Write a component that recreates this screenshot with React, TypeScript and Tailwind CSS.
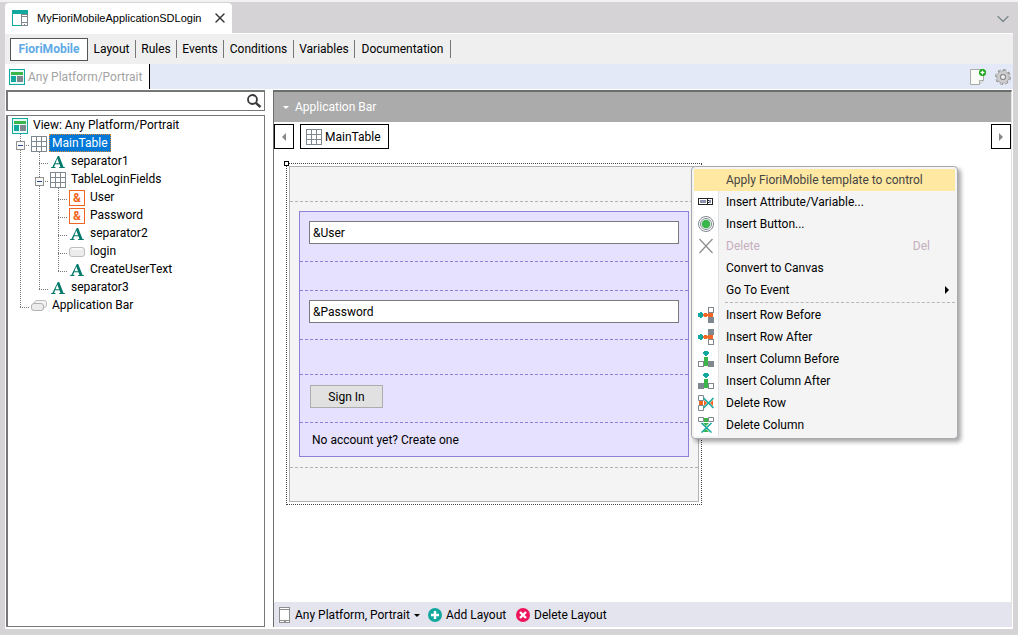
import type { ReactNode } from 'react'
import { ChevronDown, X } from 'lucide-react'
import clsx from 'clsx'

type Guide = 'line' | 'tee' | 'end'
type IconName = 'view' | 'grid' | 'text' | 'var' | 'button' | 'bar'

interface TreeRow {
  label: string
  icon: IconName
  guides: Guide[]
  expander?: boolean
  selected?: boolean
}

interface MenuEntry {
  label: string
  icon?: ReactNode
  shortcut?: string
  disabled?: boolean
  active?: boolean
  submenu?: boolean
}

// ─── Icons ───────────────────────────────────────────────────────────────────

function ViewIcon() {
  return (
    <svg className="h-4 w-4 shrink-0" viewBox="0 0 16 16" shapeRendering="crispEdges">
      <rect x="0.5" y="0.5" width="15" height="15" fill="#e9fbf8" stroke="#13a89e" />
      <rect x="2" y="3" width="12" height="3" fill="#39b54a" />
      <rect x="2" y="7" width="5" height="6" fill="#13a89e" />
      <rect x="8" y="7" width="6" height="6" fill="#7f888f" />
    </svg>
  )
}

function GridIcon() {
  return (
    <svg className="h-4 w-4 shrink-0" viewBox="0 0 16 16" shapeRendering="crispEdges">
      <rect x="0.5" y="0.5" width="15" height="15" fill="#fff" stroke="#7f888f" />
      <path d="M5.5 1v14M10.5 1v14M1 5.5h14M1 10.5h14" stroke="#7f888f" />
    </svg>
  )
}

function TextIcon() {
  return (
    <svg className="h-4 w-4 shrink-0" viewBox="0 0 16 16" fill="#00796b">
      <path d="M7.8 2h1.4l4.3 10.9 1.5.4v.7H9v-.7l1.5-.4-1-2.7H5.1l-1 2.7 1.5.4v.7H1v-.7l1.4-.4zM5.5 9.2h3.6L7.3 4.5z" />
    </svg>
  )
}

function VarIcon() {
  return (
    <span className="flex h-4 w-4 shrink-0 items-center justify-center border border-[#f26522] bg-white text-[12px] leading-3 font-bold text-[#f26522]">
      &amp;
    </span>
  )
}

function ButtonIcon() {
  return (
    <svg className="h-4 w-4 shrink-0" viewBox="0 0 16 16">
      <rect x="0.5" y="3.5" width="15" height="9" rx="2.5" fill="#ececec" stroke="#bdbdbd" />
      <path d="M3 5h10" stroke="#fafafa" strokeWidth="2" />
    </svg>
  )
}

function BarIcon() {
  return (
    <svg className="h-4 w-4 shrink-0" viewBox="0 0 16 16">
      <rect x="3.5" y="2.5" width="12" height="7" rx="2.5" fill="#f4f4f4" stroke="#bdbdbd" />
      <rect x="0.5" y="5.5" width="12" height="7" rx="2.5" fill="#ececec" stroke="#b0b0b0" />
    </svg>
  )
}

function NodeIcon({ name }: { name: IconName }) {
  switch (name) {
    case 'view':
      return <ViewIcon />
    case 'grid':
      return <GridIcon />
    case 'text':
      return <TextIcon />
    case 'var':
      return <VarIcon />
    case 'button':
      return <ButtonIcon />
    default:
      return <BarIcon />
  }
}

function PanelIcon() {
  return (
    <svg className="h-4 w-4 shrink-0" viewBox="0 0 16 16" shapeRendering="crispEdges">
      <path d="M0.5 4v11.500H9M15.500 3v2" fill="none" stroke="#13a89e" />
      <rect x="0" y="0" width="16" height="4" fill="#13a89e" />
      <rect x="9.500" y="4.500" width="6" height="11" fill="#fff" stroke="#7f888f" />
      <path d="M10 6.500h5M10 12.500h5M12 14h1" stroke="#7f888f" />
    </svg>
  )
}

function AttributeIcon() {
  return (
    <svg className="h-4 w-4" viewBox="0 0 16 16" shapeRendering="crispEdges">
      <rect x="0.5" y="4.500" width="14" height="6" fill="#fff" stroke="#222" />
      <rect x="2" y="6" width="6" height="3" fill="#8f8fb0" />
      <rect x="11" y="6" width="2" height="3" fill="#8f8fb0" />
      <path d="M9.500 4v7" stroke="#222" />
      <path d="M10.500 4v7" stroke="#222" strokeDasharray="1 1" />
    </svg>
  )
}

function TargetIcon() {
  return (
    <svg className="h-4 w-4" viewBox="0 0 16 16" fill="none" stroke="#7f888f">
      <circle cx="8" cy="8" r="7.500" />
      <circle cx="8" cy="8" r="5.500" />
      <circle cx="8" cy="8" r="4.300" fill="#39b54a" stroke="none" />
    </svg>
  )
}

function CrossIcon() {
  return (
    <svg className="h-4 w-4" viewBox="0 0 16 16" stroke="#8f8f8f" strokeWidth="1.300">
      <path d="M1.500 1l13 14M14.500 1l-13 14" />
    </svg>
  )
}

function InsertRowIcon({ after }: { after?: boolean }) {
  return (
    <svg className="h-4 w-4" viewBox="0 0 16 16" shapeRendering="crispEdges">
      <path d="M0 6h2V5h2v1h1v4H4v1H2v-1H0z" fill="#13a89e" />
      <path d="M6 6h3v4H6zM10 6h5v5h-5z" fill="#f26522" />
      <path d="M5 8h6" stroke="#f26522" strokeWidth="2" />
      <rect x="10.500" y="0.500" width="5" height="5" fill={after ? '#7f888f' : '#fff'} stroke="#7f888f" />
      <rect x="10.500" y="10.500" width="5" height="5" fill={after ? '#fff' : '#7f888f'} stroke="#7f888f" />
    </svg>
  )
}

function InsertColumnIcon({ after }: { after?: boolean }) {
  return (
    <svg className="h-4 w-4" viewBox="0 0 16 16" shapeRendering="crispEdges">
      <path d="M6 0h4v1h1v2h-1v1H9v1H7V4H6V3H5V1h1z" fill="#13a89e" />
      <path d="M6 6h4v4h1v5H5v-5h1z" fill="#39b54a" />
      <rect x="0.500" y="10.500" width="5" height="5" fill={after ? '#7f888f' : '#fff'} stroke="#7f888f" />
      <rect x="10.500" y="10.500" width="5" height="5" fill={after ? '#fff' : '#7f888f'} stroke="#7f888f" />
    </svg>
  )
}

function DeleteRowIcon() {
  return (
    <svg className="h-4 w-4" viewBox="0 0 16 16">
      <path d="M1 6h4v4H1zM6 5l3 3-3 3zM15 5l-3 3 3 3z" fill="#f26522" />
      <path d="M0.500 0.500h5v5h-5zM0.500 10.500h5v5h-5z" fill="#fff" stroke="#7f888f" />
      <path d="M5.500 3l10 10M15.500 3l-10 10" stroke="#13a89e" strokeWidth="1.500" />
    </svg>
  )
}

function DeleteColumnIcon() {
  return (
    <svg className="h-4 w-4" viewBox="0 0 16 16">
      <path d="M6 1h4v4H6zM5 6h6l-3 3zM5 15l3-3 3 3z" fill="#39b54a" />
      <path d="M0.500 0.500h5v4h-5zM10.500 0.500h5v4h-5z" fill="#fff" stroke="#7f888f" />
      <path d="M3.500 6l10 9.500M13.500 6l-10 9.500" stroke="#13a89e" strokeWidth="1.500" />
    </svg>
  )
}

function NewPageIcon() {
  return (
    <svg className="h-4 w-4" viewBox="0 0 16 16">
      <path d="M0.500 0.500h13v11l-4 4h-9z" fill="#fbfcf8" stroke="#a9aca6" />
      <path d="M9.500 15.500v-4h4" fill="#e6e6e6" stroke="#a9aca6" />
      <circle cx="12.500" cy="3.500" r="3.500" fill="#12a312" />
      <path d="M12.500 1.500v4M10.500 3.500h4" stroke="#fff" strokeWidth="1.300" />
    </svg>
  )
}

function GearIcon() {
  return (
    <svg className="h-4 w-4" viewBox="0 0 16 16" fill="none">
      <circle cx="8" cy="8" r="6.800" stroke="#8a8a8a" strokeWidth="2.200" strokeDasharray="3 2.340" />
      <circle cx="8" cy="8" r="4.500" stroke="#8a8a8a" strokeWidth="4" />
      <circle cx="8" cy="8" r="4.500" stroke="#cdcdcd" strokeWidth="2.800" />
      <circle cx="8" cy="8" r="6.400" stroke="#cdcdcd" strokeWidth="1.500" strokeDasharray="2 3.030" strokeDashoffset="-0.500" />
      <circle cx="8" cy="8" r="2.500" fill="#f0f2f8" stroke="#7d7d7d" />
    </svg>
  )
}

function SearchIcon() {
  return (
    <svg className="h-4 w-4 shrink-0" viewBox="0 0 16 16" fill="none" stroke="#3a3a3a">
      <circle cx="6.500" cy="6.500" r="4.500" strokeWidth="1.800" />
      <path d="M9.800 9.800l4.700 4.200" strokeWidth="2.400" />
    </svg>
  )
}

function PhoneIcon() {
  return (
    <svg className="h-4 w-3 shrink-0" viewBox="0 0 12 16" shapeRendering="crispEdges">
      <rect x="0.500" y="0.500" width="10" height="15" fill="#fff" stroke="#8f8f8f" />
      <path d="M1 2.500h9M1 13.500h9M5 14.500h2" stroke="#8f8f8f" />
    </svg>
  )
}

function AddIcon() {
  return (
    <svg className="h-4 w-4 shrink-0" viewBox="0 0 16 16">
      <circle cx="8" cy="8" r="7" fill="#13a89e" />
      <path d="M8 4v8M4 8h8" stroke="#fff" strokeWidth="2.400" />
    </svg>
  )
}

function RemoveIcon() {
  return (
    <svg className="h-4 w-4 shrink-0" viewBox="0 0 16 16">
      <circle cx="8" cy="8" r="7" fill="#ed145b" />
      <path d="M5 5l6 6M11 5l-6 6" stroke="#fff" strokeWidth="2.400" />
    </svg>
  )
}

function Arrow({ dir, className }: { dir: 'left' | 'right' | 'down'; className?: string }) {
  const d = { left: 'M5 0v8L1 4z', right: 'M1 0v8l4-4z', down: 'M0 3h6L3 6z' }[dir]
  return (
    <svg className={clsx('h-2 w-1.5 shrink-0', className)} viewBox="0 0 6 8" fill="currentColor">
      <path d={d} />
    </svg>
  )
}

// ─── Data ────────────────────────────────────────────────────────────────────

const TABS = [
  { label: 'Layout', width: 'w-12' },
  { label: 'Rules', width: 'w-[41px]' },
  { label: 'Events', width: 'w-[47px]' },
  { label: 'Conditions', width: 'w-[70px]' },
  { label: 'Variables', width: 'w-[61px]' },
  { label: 'Documentation', width: 'w-24' },
]

const TREE: TreeRow[] = [
  { label: 'View: Any Platform/Portrait', icon: 'view', guides: [] },
  { label: 'MainTable', icon: 'grid', guides: ['tee'], expander: true, selected: true },
  { label: 'separator1', icon: 'text', guides: ['line', 'tee'] },
  { label: 'TableLoginFields', icon: 'grid', guides: ['line', 'tee'], expander: true },
  { label: 'User', icon: 'var', guides: ['line', 'line', 'tee'] },
  { label: 'Password', icon: 'var', guides: ['line', 'line', 'tee'] },
  { label: 'separator2', icon: 'text', guides: ['line', 'line', 'tee'] },
  { label: 'login', icon: 'button', guides: ['line', 'line', 'tee'] },
  { label: 'CreateUserText', icon: 'text', guides: ['line', 'line', 'end'] },
  { label: 'separator3', icon: 'text', guides: ['line', 'end'] },
  { label: 'Application Bar', icon: 'bar', guides: ['end'] },
]

const MENU_TOP: MenuEntry[] = [
  { label: 'Apply FioriMobile template to control', active: true },
  { label: 'Insert Attribute/Variable...', icon: <AttributeIcon /> },
  { label: 'Insert Button...', icon: <TargetIcon /> },
  { label: 'Delete', icon: <CrossIcon />, shortcut: 'Del', disabled: true },
  { label: 'Convert to Canvas' },
  { label: 'Go To Event', submenu: true },
]

const MENU_BOTTOM: MenuEntry[] = [
  { label: 'Insert Row Before', icon: <InsertRowIcon /> },
  { label: 'Insert Row After', icon: <InsertRowIcon after /> },
  { label: 'Insert Column Before', icon: <InsertColumnIcon /> },
  { label: 'Insert Column After', icon: <InsertColumnIcon after /> },
  { label: 'Delete Row', icon: <DeleteRowIcon /> },
  { label: 'Delete Column', icon: <DeleteColumnIcon /> },
]

// ─── Parts ───────────────────────────────────────────────────────────────────

function TreeGuide({ kind, expander }: { kind: Guide; expander?: boolean }) {
  return (
    <svg className="h-[18px] w-[19px] shrink-0" viewBox="0 0 19 18" shapeRendering="crispEdges" fill="none">
      <path d={kind === 'end' ? 'M9.500 0v12' : 'M9.500 0v18'} stroke="#777" strokeDasharray="1 1" />
      {kind !== 'line' && <path d="M9 11.500h10" stroke="#777" strokeDasharray="1 1" />}
      {expander && (
        <>
          <rect x="5.500" y="7.500" width="8" height="8" fill="#f7f7f7" stroke="#919191" />
          <path d="M7 11.500h5" stroke="#2b4b8f" />
        </>
      )}
    </svg>
  )
}

function TreeItem({ row }: { row: TreeRow }) {
  const last = row.guides.length - 1
  return (
    <li role="treeitem" aria-selected={!!row.selected} className="flex h-[18px] items-end">
      {row.guides.map((g, i) => (
        // only the last column branches, the ones before it pass straight through
        <TreeGuide key={i} kind={g} expander={row.expander && i === last} />
      ))}
      <span className="ml-px flex">
        <NodeIcon name={row.icon} />
      </span>
      <span
        className={clsx(
          'ml-0.5 flex h-[18px] items-center whitespace-nowrap px-[3px]',
          row.selected && 'bg-[#0078d7] text-white outline-1 -outline-offset-1 outline-dotted outline-[#e08a2b]'
        )}
      >
        {row.label}
      </span>
    </li>
  )
}

function MenuItem({ item }: { item: MenuEntry }) {
  return (
    <li role="none">
      <button
        type="button"
        role="menuitem"
        disabled={item.disabled}
        className={clsx(
          'flex h-[22px] w-full items-center pr-[5px] text-left',
          item.active && 'bg-[#ffe8a2] text-[#444]',
          item.disabled && 'text-[#c5aebd]'
        )}
      >
        <span
          className={clsx(
            'flex h-full w-[25px] shrink-0 items-center justify-center',
            !item.active && 'border-r border-[#e2e3e6] bg-white'
          )}
        >
          {item.icon}
        </span>
        <span className="ml-[7px] flex-1 whitespace-nowrap">{item.label}</span>
        {item.shortcut && <span className="mr-5">{item.shortcut}</span>}
        {item.submenu && <Arrow dir="right" />}
      </button>
    </li>
  )
}

function ContextMenu() {
  return (
    <div
      role="menu"
      className="absolute top-[17px] left-[417px] w-[267px] rounded-sm border border-[#a7abb0] bg-[#f4f4f4] p-0.5 shadow-[3px_3px_4px_rgba(0,0,0,0.35)]"
    >
      <ul role="none">
        {MENU_TOP.map((item) => (
          <MenuItem key={item.label} item={item} />
        ))}
      </ul>
      <div className="flex h-[3px]">
        <span className="w-[25px] border-r border-[#e2e3e6] bg-white" />
        <span className="ml-1.5 h-0.5 flex-1 border-b border-dashed border-[#b8b8b8]" />
      </div>
      <ul role="none">
        {MENU_BOTTOM.map((item) => (
          <MenuItem key={item.label} item={item} />
        ))}
      </ul>
    </div>
  )
}

function Field({ label }: { label: string }) {
  return (
    <input
      type="text"
      aria-label={label}
      defaultValue={label}
      className="h-[23px] w-full border border-[#7a7a7a] bg-white px-[3px] outline-none"
    />
  )
}

function FormDesigner() {
  return (
    <div className="relative mt-3.5 ml-3 w-[416px] border border-dotted border-[#444] p-0.5">
      {/* resize handle */}
      <span className="absolute -top-[3px] -left-[3px] h-[5px] w-[5px] border border-black bg-white" />
      <div className="border border-[#b2b2b2] bg-[#f4f4f4]">
        <div className="h-[35px] border-b border-dashed border-[#b2b2b2]" />
        <div className="border-b border-dashed border-[#b2b2b2] px-[9px] pt-[9px] pb-2.5">
          <form className="border border-[#8f7fd8] bg-[#e6e1ff]" onSubmit={(e) => e.preventDefault()}>
            <div className="h-[50px] border-b border-dashed border-[#8f7fd8] px-[9px] pt-[9px]">
              <Field label="&User" />
            </div>
            <div className="h-[29px] border-b border-dashed border-[#8f7fd8]" />
            <div className="h-[49px] border-b border-dashed border-[#8f7fd8] px-[9px] pt-[9px]">
              <Field label="&Password" />
            </div>
            <div className="h-[35px] border-b border-dashed border-[#8f7fd8]" />
            <div className="h-12 border-b border-dashed border-[#8f7fd8] px-2.5 pt-2.5">
              <button type="submit" className="h-[23px] w-[73px] border border-[#adadad] bg-[#e1e1e1]">
                Sign In
              </button>
            </div>
            <p className="flex h-[33px] items-center px-3">No account yet? Create one</p>
          </form>
        </div>
        <div className="h-[33px]" />
      </div>
    </div>
  )
}

// ─────────────────────────────────────────────────────────────────────────────

export default function App() {
  return (
    <div className="flex min-h-screen flex-col border-t-2 border-[#f2f2f2] bg-[#d5d3d6] px-[5px] pb-1.5 font-['Roboto','Open_Sans',sans-serif] text-[12px] leading-4 text-black">
      {/* Document tab */}
      <header className="flex h-[31px] items-end justify-between">
        <div className="flex h-[30px] w-[227px] items-center rounded-t-sm bg-white pl-[7px]">
          <PanelIcon />
          <span className="ml-[9px] flex-1 whitespace-nowrap font-['Liberation_Sans',sans-serif] text-[11px]">
            MyFioriMobileApplicationSDLogin
          </span>
          <button type="button" aria-label="Close" className="mr-1">
            <X className="h-4 w-4 text-[#333]" strokeWidth={2} />
          </button>
        </div>
        <button type="button" aria-label="Documents">
          <ChevronDown className="h-7 w-5 text-[#7b858b]" strokeWidth={1.5} />
        </button>
      </header>

      <div className="flex flex-1 flex-col bg-white pb-0.5">
        <nav className="mt-px flex h-[30px] items-center bg-[#efefef] pl-[5px]">
          <button type="button" className="h-[23px] w-[78px] border border-[#555] bg-white font-bold text-[#5eaae6]">
            FioriMobile
          </button>
          {TABS.map((tab) => (
            <button
              key={tab.label}
              type="button"
              className={clsx('h-[18px] border-r border-[#777] text-center whitespace-nowrap', tab.width)}
            >
              {tab.label}
            </button>
          ))}
        </nav>

        <div className="flex h-[25px] items-center justify-between bg-[#e3e9f7]">
          <div className="flex h-full w-[145px] items-center border-r border-black bg-white pl-1 text-[#a3a3a3]">
            <ViewIcon />
            <span className="ml-[3px] whitespace-nowrap">Any Platform/Portrait</span>
          </div>
          <div className="flex gap-[9px] pr-0.5">
            <button type="button" aria-label="New layout">
              <NewPageIcon />
            </button>
            <button type="button" aria-label="Settings">
              <GearIcon />
            </button>
          </div>
        </div>

        <div className="mt-px flex flex-1 gap-2 px-px">
          {/* Control tree */}
          <aside className="flex w-[259px] shrink-0 flex-col">
            <div className="flex h-[21px] items-center border border-t-2 border-l-2 border-[#777] pr-0.5">
              <input type="search" aria-label="Search controls" className="min-w-0 flex-1 px-1 outline-none" />
              <SearchIcon />
            </div>
            <ul role="tree" className="mt-1 flex-1 border border-l-2 border-[#777] pl-[3px]">
              {TREE.map((row) => (
                <TreeItem key={row.label} row={row} />
              ))}
            </ul>
          </aside>

          {/* Designer */}
          <main className="flex min-w-0 flex-1 flex-col border-t-2 border-r border-l border-t-[#6d6d6d] border-r-[#e3e3e3] border-l-[#6d6d6d]">
            <div className="flex h-[30px] items-center bg-[#ababab] pl-[9px] text-white">
              <Arrow dir="down" />
              <span className="ml-1.5">Application Bar</span>
            </div>
            <div className="mt-0.5 flex h-[25px] items-stretch">
              <button
                type="button"
                aria-label="Previous"
                className="flex w-5 items-center justify-center border border-black text-[#888]"
              >
                <Arrow dir="left" />
              </button>
              <button type="button" className="ml-1.5 flex w-[89px] items-center border border-black pl-[5px]">
                <GridIcon />
                <span className="ml-[3px]">MainTable</span>
              </button>
              <button
                type="button"
                aria-label="Next"
                className="ml-auto flex w-5 items-center justify-center border border-black text-[#888]"
              >
                <Arrow dir="right" />
              </button>
            </div>
            <div className="relative flex-1">
              <FormDesigner />
              <ContextMenu />
            </div>
            <footer className="flex h-[25px] items-center bg-[#e4e4ef] pl-[5px]">
              <button type="button" className="flex w-[148px] items-center whitespace-nowrap">
                <PhoneIcon />
                <span className="ml-1">Any Platform, Portrait</span>
                <Arrow dir="down" className="ml-1" />
              </button>
              <button type="button" className="flex w-22 items-center whitespace-nowrap">
                <AddIcon />
                <span className="ml-[3px]">Add Layout</span>
              </button>
              <button type="button" className="flex items-center whitespace-nowrap">
                <RemoveIcon />
                <span className="ml-[3px]">Delete Layout</span>
              </button>
            </footer>
          </main>
        </div>
      </div>
    </div>
  )
}
